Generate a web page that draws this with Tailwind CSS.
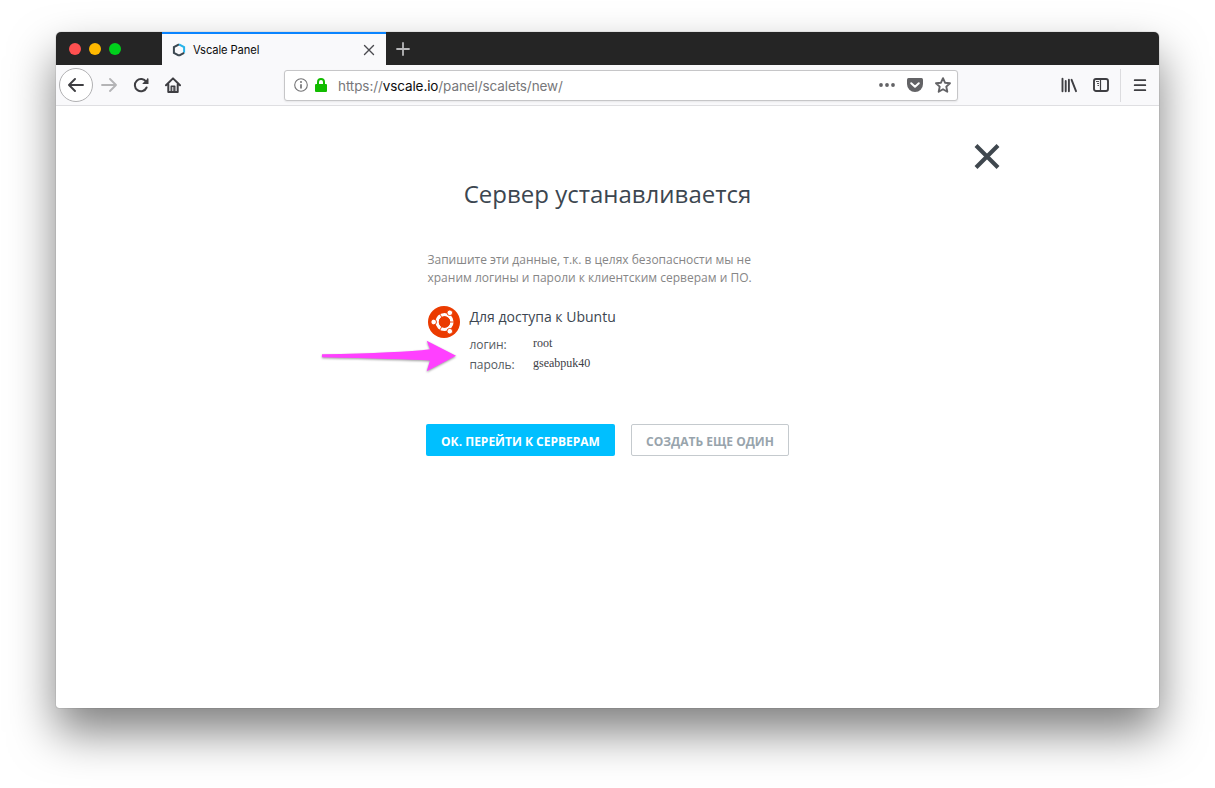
<!DOCTYPE html>
<html lang="ru">
<head>
<meta charset="utf-8">
<title>Vscale Panel</title>
<script src="https://cdn.jsdelivr.net/npm/@tailwindcss/browser@4"></script>
</head>
<body class="bg-white w-[1215px] h-[788px] overflow-hidden pl-14 pt-8 font-['Open_Sans','Noto_Sans',sans-serif]">
<div class="relative w-[1103px] h-[676px] rounded-t-[5px] rounded-b-[3px] bg-white flex flex-col shadow-[0_0_1px_rgba(0,0,0,0.6),0_24px_46px_rgba(0,0,0,0.5)]">
  <!-- tab strip -->
  <div class="flex h-[33px] shrink-0 bg-[#252525] rounded-t-[5px]">
    <div class="w-[106px] flex items-center gap-2 pl-[13px]">
      <span class="size-3 rounded-full bg-[#ff5050]"></span>
      <span class="size-3 rounded-full bg-[#ffb900]"></span>
      <span class="size-3 rounded-full bg-[#00d01c]"></span>
    </div>
    <div class="w-[224px] bg-[#f9f9fb] border-t-2 border-[#0a84ff] flex items-center pl-[10px] pr-[11px]">
      <svg class="w-[14px] h-[14px]" viewBox="0 0 14 14" fill="none" stroke-width="2"><path d="M7 1.3 1.9 4.2V9.8L7 12.7" stroke="#3b4750"/><path d="M7 1.3 12.1 4.2V9.8" stroke="#27b3ea"/><path d="M12.1 9.8 7 12.7" stroke="#3b4750"/></svg>
      <span class="ml-[7px] text-[11.2px] leading-4 text-[#0c0c0d] font-[Inter,sans-serif] tracking-[-0.1px] whitespace-nowrap">Vscale Panel</span>
      <svg class="ml-auto size-3" viewBox="0 0 12 12" stroke="#4a4a4f" stroke-width="1.4" stroke-linecap="round"><path d="M1.5 1.5 10.5 10.5M10.5 1.5 1.5 10.5"/></svg>
    </div>
    <div class="flex items-center pl-[10px]">
      <svg class="size-[14px]" viewBox="0 0 14 14" stroke="#b8b8ba" stroke-width="1.8" stroke-linecap="round"><path d="M7 1V13M1 7H13"/></svg>
    </div>
  </div>
  <!-- toolbar -->
  <div class="flex h-[41px] shrink-0 items-center bg-[#f9f9fb] border-b border-[#dfdfe2] pl-[3px]">
    <div class="size-[34px] rounded-full border border-[#b1b1b3] bg-white flex items-center justify-center">
      <svg class="size-4" viewBox="0 0 16 16" fill="none" stroke="#3e3e42" stroke-width="1.9" stroke-linecap="round" stroke-linejoin="round"><path d="M15 8H1.5M7 2 1 8 7 14"/></svg>
    </div>
    <svg class="ml-2 size-4" viewBox="0 0 16 16" fill="none" stroke="#b4b4b6" stroke-width="1.8" stroke-linecap="round" stroke-linejoin="round"><path d="M1 8H14.5M9 2 15 8 9 14"/></svg>
    <svg class="ml-4 size-4" viewBox="0 0 16 16" fill="none" stroke="#3e3e42" stroke-width="2" stroke-linecap="round"><path d="M13.2 5A6.1 6.1 0 1 0 13.6 10.5"/><path d="M15 1.2V6.8H9.4Z" fill="#3e3e42" stroke="none"/><path d="M14.8 2V6.4H10.4" stroke-width="1.4"/></svg>
    <svg class="ml-4 size-4" viewBox="0 0 16 16" fill="none" stroke="#3e3e42" stroke-width="2" stroke-linecap="round" stroke-linejoin="round"><path d="M1 8.3 8 1.4 15 8.3M3.3 7.5V15H12.7V7.5"/><path d="M6.2 15V9.3H9.8V15" stroke-width="1.4"/><path d="M8.2 9.5V14.8" stroke-width="1"/></svg>
    <div class="ml-[103px] w-[674px] h-[31px] rounded-[3px] border border-[#c6c6c8] bg-white shadow-[0_1px_2px_rgba(0,0,0,0.08)] flex items-center pl-[9px] pr-[6px]">
      <svg class="size-[14px]" viewBox="0 0 14 14" fill="none" stroke="#737375"><circle cx="7" cy="7" r="6.3" stroke-width="1.1"/><path d="M7 6.3V10.6" stroke-width="1.7"/><circle cx="7" cy="4" r="1" fill="#737375" stroke="none"/></svg>
      <svg class="ml-[7px] w-3 h-[14px]" viewBox="0 0 12 14" fill="none"><path d="M3 7V4A3 3 0 0 1 9 4V7" stroke="#12bc00" stroke-width="2"/><rect x="0" y="6" width="12" height="8" rx="1" fill="#12bc00"/></svg>
      <span class="ml-[11px] pt-px text-[13.5px] leading-5 text-[#77777a] font-[Inter,sans-serif] tracking-[-0.1px] whitespace-nowrap">https://<span class="text-[#0c0c0d]">vscale.io</span>/panel/scalets/new/</span>
      <svg class="ml-auto w-4 h-4" viewBox="0 0 16 16" fill="#636366"><circle cx="2" cy="8" r="1.9"/><circle cx="8" cy="8" r="1.9"/><circle cx="14" cy="8" r="1.9"/></svg>
      <svg class="ml-3 size-4" viewBox="0 0 16 16"><path d="M1.5 1H14.5Q16 1 16 2.5V7A8 8 0 0 1 0 7V2.5Q0 1 1.5 1Z" fill="#636366"/><path d="M4.2 6.2 8 9.8 11.8 6.2" fill="none" stroke="#fff" stroke-width="2" stroke-linecap="round" stroke-linejoin="round"/></svg>
      <svg class="ml-3 size-4" viewBox="0 0 16 16" fill="none" stroke="#636366" stroke-width="1.9" stroke-linejoin="round"><path d="M8 1.2 10 5.7 15 6.2 11.3 9.6 12.3 14.7 8 12.2 3.7 14.7 4.7 9.6 1 6.2 6 5.7Z"/></svg>
    </div>
    <svg class="ml-[103px] size-4" viewBox="0 0 16 16" fill="none" stroke="#3e3e42" stroke-width="1.9" stroke-linecap="round"><path d="M1.5 1.8V14.2M4.7 4V14.2M7.9 2.8V14.2M10.6 2.8 15 14.2"/></svg>
    <svg class="ml-4 size-4" viewBox="0 0 16 16" fill="none" stroke="#3e3e42"><rect x="1" y="2" width="14" height="12" rx="2" stroke-width="1.9"/><path d="M7.5 2V14" stroke-width="1.2"/><path d="M3 4.5H6M4 6.5H6M4.5 8.5H6" stroke-width="0.9"/></svg>
    <div class="ml-[11px] w-px h-[33px] bg-[#dcdcdf]"></div>
    <svg class="ml-[11px] size-4" viewBox="0 0 16 16" stroke="#3e3e42" stroke-width="1.8" stroke-linecap="round"><path d="M2.7 3.2H13.3M2.7 8.2H13.3M2.7 13.2H13.3"/></svg>
  </div>
  <!-- page -->
  <div class="flex flex-col text-[#3c4650]">
    <div class="flex justify-end pt-[37px] pr-[159px]">
      <svg class="size-[26px]" viewBox="0 0 26 26" stroke="#3f474e" stroke-width="4.1"><path d="M2 2.5 24 24.5M24 2.5 2 24.5"/></svg>
    </div>
    <h1 class="mt-[7px] text-center text-[24px] leading-[36px] whitespace-nowrap">Сервер устанавливается</h1>
    <div class="ml-[370px] mt-[39px] w-[365px]">
      <p class="pl-[1.5px] text-[12px] leading-[18px] text-[#868686] whitespace-nowrap">Запишите эти данные, т.к. в целях безопасности мы не<br>храним логины и пароли к клиентским серверам и ПО.</p>
      <div class="flex mt-[19px] pl-[1.5px]">
        <svg class="size-8 shrink-0" viewBox="0 0 32 32"><circle cx="16" cy="16" r="16" fill="#eb3b00"/><circle cx="16.5" cy="16" r="7.4" fill="none" stroke="#fff" stroke-width="3.4"/><g stroke="#eb3b00" stroke-width="0.9"><path d="M16.5 16H27M16.5 16 11 6.5M16.5 16 11 25.5"/></g><circle cx="16.5" cy="16" r="5.7" fill="#eb3b00"/><g fill="#fff" stroke="#eb3b00" stroke-width="0.9"><circle cx="5.7" cy="16" r="2.8"/><circle cx="21.8" cy="6.8" r="2.8"/><circle cx="21.8" cy="25.2" r="2.8"/></g></svg>
        <div class="ml-[10px]">
          <div class="text-[14px] leading-[22px] whitespace-nowrap">Для доступа к Ubuntu</div>
          <div class="mt-[6px] grid grid-cols-[63.5px_1fr] text-[12px] leading-5 text-[#555b61]">
            <span class="pt-px -mb-px tracking-[-0.1px]">логин:</span><span class="font-['Liberation_Serif',serif] text-[#3c4046] -mt-px">root</span>
            <span class="pt-px -mb-px tracking-[-0.1px]">пароль:</span><span class="font-['Liberation_Serif',serif] text-[#3c4046] -mt-px">gseabpuk40</span>
          </div>
        </div>
      </div>
      <div class="flex gap-4 mt-[50px] text-[12px] font-bold whitespace-nowrap">
        <div class="w-[189px] h-8 rounded-[2px] bg-[#00bfff] text-white flex items-center justify-center pt-[3px]">ОК. ПЕРЕЙТИ К СЕРВЕРАМ</div>
        <div class="w-[158px] h-8 rounded-[2px] border border-[#c5cace] text-[#98a4ac] flex items-center justify-center pt-[3px]">СОЗДАТЬ ЕЩЕ ОДИН</div>
      </div>
    </div>
  </div>
  <!-- annotation arrow -->
  <svg class="absolute left-[262px] top-[304px] w-[144px] h-[40px] overflow-visible" viewBox="318 336 144 40"><path d="M322 354.3Q400 353 430 349.3L426.7 340.7 456 355.7 426.7 371.3 430 360.5Q400 359 322 357.3Z" fill="#ff40ff" class="drop-shadow-[0_1px_1px_rgba(0,0,0,0.4)]"/></svg>
</div>
</body>
</html>
